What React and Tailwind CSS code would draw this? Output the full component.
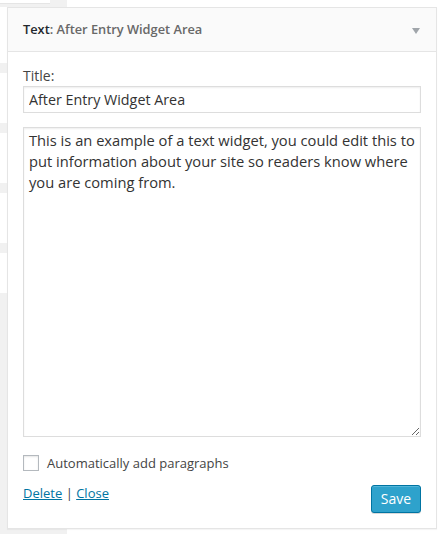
export default function App() {
  return (
    <div
      className="relative w-[443px] h-[534px] overflow-hidden bg-white text-[#444]"
      style={{ fontFamily: '"Open Sans", "Liberation Sans", sans-serif' }}
    >
      {/* sidebar list behind the open widget */}
      <div className="absolute left-0 top-0 w-[67px] h-full bg-[#f1f1f1]">
        <div className="h-[4px] w-[50px] bg-white border-b border-[#e5e5e5]" />
        <div className="flex flex-col gap-[10px] mt-[3px] w-[8px]">
          <div className="h-[56px] bg-white" />
          <div className="h-[50px] bg-white" />
          <div className="h-[50px] bg-white" />
          <div className="h-[50px] bg-white" />
          <div className="h-[40px] bg-white" />
        </div>
      </div>

      <div className="relative pt-[7px] pl-[7px]">
        <div className="w-[430px] h-[522px] bg-white border border-[#e5e5e5] shadow-[0_1px_1px_rgba(0,0,0,0.04)] flex flex-col">
          {/* header */}
          <div className="h-[44px] shrink-0 bg-[#fafafa] border-b border-[#e5e5e5] flex items-center justify-between pl-[15px] pr-[16px]">
            <h3 className="text-[12.8px] font-semibold text-[#23282d] leading-none">
              Text<span className="text-[#686868]">: After Entry Widget Area</span>
            </h3>
            <svg width="8" height="6" viewBox="0 0 8 6" className="mt-[2px]">
              <path d="M0 0 H8 L4 6 Z" fill="#a0a5aa" />
            </svg>
          </div>

          {/* body */}
          <div className="flex flex-col px-[15px] pt-[14px] pb-[14px] flex-1">
            <label className="text-[14px] leading-[20px] text-[#444]">Title:</label>
            <input
              type="text"
              readOnly
              defaultValue="After Entry Widget Area"
              className="h-[27px] w-full border border-[#ddd] shadow-[inset_0_1px_2px_rgba(0,0,0,0.07)] px-[5px] text-[14.3px] text-[#333] outline-none"
            />
            <textarea
              readOnly
              defaultValue="This is an example of a text widget, you could edit this to put information about your site so readers know where you are coming from."
              className="mt-[14px] h-[310px] w-full border border-[#ddd] shadow-[inset_0_1px_2px_rgba(0,0,0,0.07)] px-[5px] py-[2px] text-[14.7px] leading-[21px] text-[#333] outline-none"
            />
            <div className="mt-[18px] flex items-center gap-[8px]">
              <span className="w-[16px] h-[16px] border border-[#b4b9be] bg-white shadow-[inset_0_1px_2px_rgba(0,0,0,0.1)]" />
              <span className="text-[13px] leading-[16px] text-[#444]">Automatically add paragraphs</span>
            </div>
            <div className="mt-[14px] flex items-start justify-between">
              <div className="text-[13px] leading-[16px]">
                <a href="#" className="text-[#0074a2] underline">Delete</a>
                <span className="text-[#444]"> | </span>
                <a href="#" className="text-[#0074a2] underline">Close</a>
              </div>
              <button className="w-[50px] h-[28px] rounded-[3px] bg-[#2ea2cc] border border-[#0074a2] shadow-[inset_0_1px_0_rgba(120,200,230,0.5),0_1px_0_rgba(0,0,0,0.15)] text-white text-[14px] leading-none">
                Save
              </button>
            </div>
          </div>
        </div>
      </div>
    </div>
  );
}
